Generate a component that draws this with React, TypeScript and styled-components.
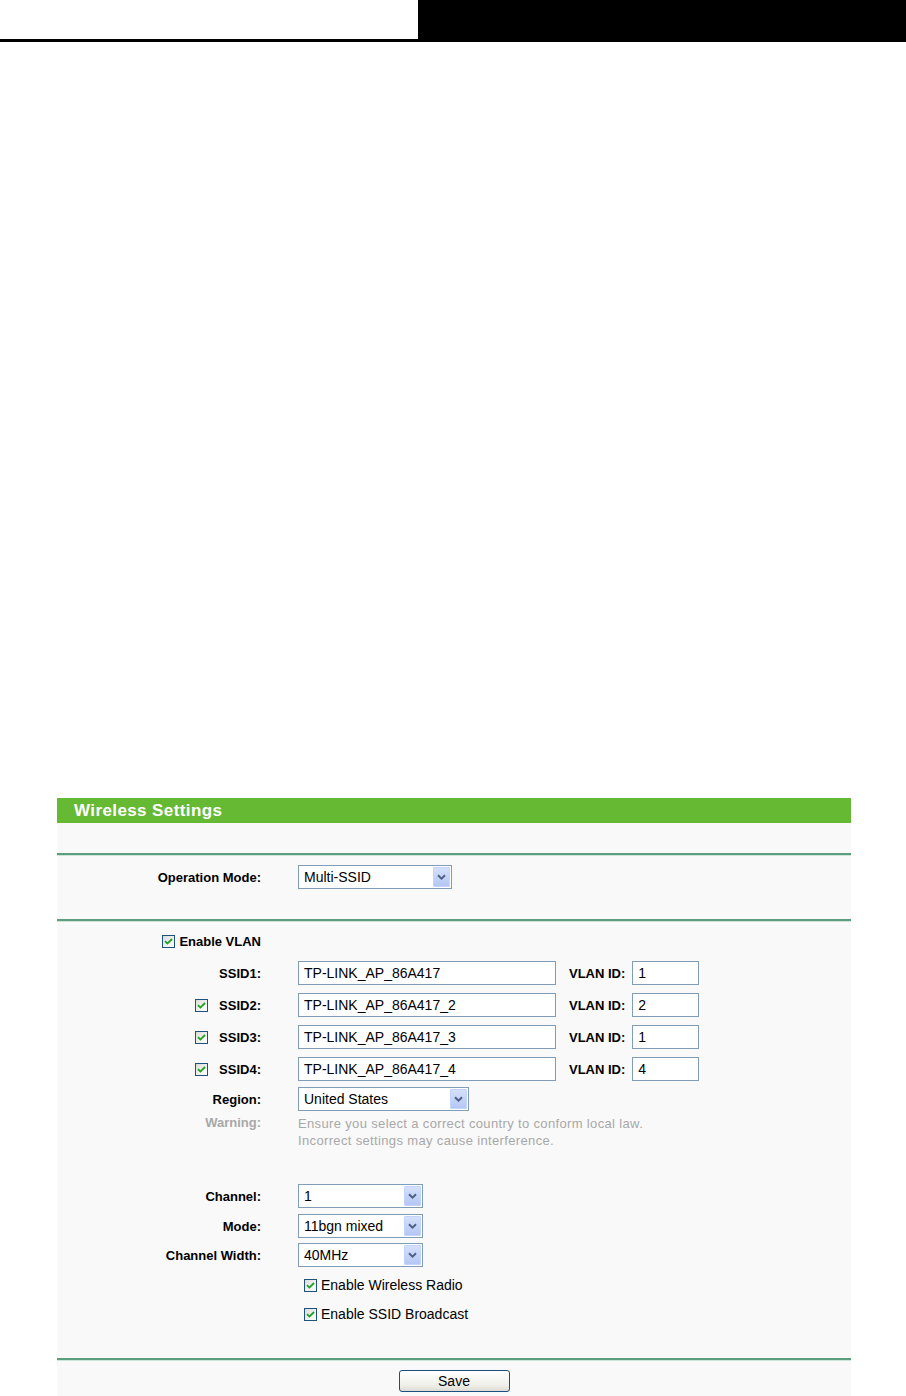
import React from 'react'
import styled, { createGlobalStyle } from 'styled-components'

const GlobalStyle = createGlobalStyle`
  html, body {
    margin: 0;
    padding: 0;
    background: #ffffff;
  }
  body {
    font-family: "Liberation Sans", Arial, sans-serif;
    color: #000000;
  }
`

const TopBar = styled.div`
  display: flex;
  height: 39px;

  & .blank {
    width: 418px;
    background: #ffffff;
  }
  & .dark {
    flex: 1;
    background: #000000;
  }
`

const TopRule = styled.div`
  height: 3px;
  background: #000000;
`

const Main = styled.div`
  padding: 756px 0 0 57px;
`

const Panel = styled.div`
  width: 794px;
  background: #f9f9f9;
`

const PanelTitle = styled.div`
  height: 25px;
  line-height: 25px;
  padding-left: 17px;
  background: #66b933;
  color: #ffffff;
  font-size: 17px;
  letter-spacing: 0.4px;
  font-weight: bold;
`

const Divider = styled.div`
  border-top: 2px solid #5d9c7d;
  border-bottom: 1px solid #cfe4d9;
`

const Section = styled.div<{ $top: number; $bottom: number }>`
  padding-top: ${({ $top }) => $top}px;
  padding-bottom: ${({ $bottom }) => $bottom}px;
`

const Row = styled.div<{ $top?: number }>`
  display: flex;
  align-items: center;
  height: 24px;
  margin-top: ${({ $top }) => $top ?? 0}px;
`

const Label = styled.div<{ $muted?: boolean }>`
  width: 204px;
  flex: none;
  display: flex;
  justify-content: flex-end;
  align-items: center;
  gap: 11px;
  font-size: 13px;
  font-weight: bold;
  color: ${({ $muted }) => ($muted ? '#a8a8a8' : '#000000')};
  white-space: nowrap;
`

const Content = styled.div<{ $indent?: number }>`
  margin-left: ${({ $indent }) => $indent ?? 37}px;
  display: flex;
  align-items: center;
`

const TextBox = styled.div<{ $width: number }>`
  box-sizing: border-box;
  width: ${({ $width }) => $width}px;
  height: 24px;
  border: 1px solid #7f9db9;
  background: #ffffff;
  padding-left: 5px;
  font-size: 14px;
  line-height: 22px;
  white-space: nowrap;
`

const InlineLabel = styled.span`
  margin: 0 7px 0 13px;
  font-size: 13px;
  font-weight: bold;
`

const SelectBox = styled.div<{ $width: number }>`
  box-sizing: border-box;
  width: ${({ $width }) => $width}px;
  height: 24px;
  border: 1px solid #7f9db9;
  background: #ffffff;
  display: flex;
  align-items: center;
  padding: 1px;
  font-size: 14px;

  & .value {
    flex: 1;
    padding-left: 4px;
    white-space: nowrap;
  }
`

const ArrowButton = styled.div`
  width: 17px;
  height: 20px;
  box-sizing: border-box;
  border: 1px solid #c3d3fd;
  border-radius: 1px;
  background: linear-gradient(#d4e0fb, #b4c7f4);
  display: flex;
  align-items: center;
  justify-content: center;
`

const CheckBox = styled.span`
  box-sizing: border-box;
  width: 13px;
  height: 13px;
  flex: none;
  border: 1px solid #1c5180;
  background: linear-gradient(135deg, #dcdcd7, #ffffff);
  display: inline-flex;
  align-items: center;
  justify-content: center;
`

const CheckLabel = styled.label<{ $bold?: boolean }>`
  display: flex;
  align-items: center;
  gap: 4px;
  font-size: ${({ $bold }) => ($bold ? 13 : 14)}px;
  font-weight: ${({ $bold }) => ($bold ? 'bold' : 'normal')};
`

const WarningRow = styled.div`
  display: flex;
  align-items: flex-start;
  margin-top: 4px;
`

const WarningText = styled.div`
  margin-left: 37px;
  font-size: 13px;
  line-height: 17px;
  letter-spacing: 0.35px;
  color: #a8a8a8;
`

const ButtonBar = styled.div`
  display: flex;
  justify-content: center;
  padding: 9px 0 6px;
`

const SaveButton = styled.button`
  width: 111px;
  height: 22px;
  border: 1px solid #1c4f7f;
  border-radius: 3px;
  background: linear-gradient(#ffffff, #f0f0ea 70%, #dcdcd4);
  font-family: "Liberation Sans", Arial, sans-serif;
  font-size: 14px;
  color: #000000;
  padding: 0;
`

const Check = () => (
  <CheckBox>
    <svg width="9" height="9" viewBox="0 0 9 9">
      <path d="M1 4.2 L3.4 6.6 L8 2" fill="none" stroke="#21a121" strokeWidth="1.8" />
    </svg>
  </CheckBox>
)

const Select: React.FC<{ value: string; width: number }> = ({ value, width }) => (
  <SelectBox $width={width}>
    <span className="value">{value}</span>
    <ArrowButton>
      <svg width="9" height="6" viewBox="0 0 9 6">
        <path d="M1 1.2 L4.5 4.6 L8 1.2" fill="none" stroke="#4d6185" strokeWidth="2" />
      </svg>
    </ArrowButton>
  </SelectBox>
)

const ssids = [
  { n: 1, name: 'TP-LINK_AP_86A417', vlan: '1', check: false },
  { n: 2, name: 'TP-LINK_AP_86A417_2', vlan: '2', check: true },
  { n: 3, name: 'TP-LINK_AP_86A417_3', vlan: '1', check: true },
  { n: 4, name: 'TP-LINK_AP_86A417_4', vlan: '4', check: true }
]

export default function App() {
  return (
    <>
      <GlobalStyle />
      <TopBar>
        <div className="blank" />
        <div className="dark" />
      </TopBar>
      <TopRule />
      <Main>
        <Panel>
          <PanelTitle>Wireless Settings</PanelTitle>
          <Section $top={30} $bottom={0} />
          <Divider />
          <Section $top={9} $bottom={30}>
            <Row>
              <Label>Operation Mode:</Label>
              <Content>
                <Select value="Multi-SSID" width={154} />
              </Content>
            </Row>
          </Section>
          <Divider />
          <Section $top={7} $bottom={32}>
            <Row>
              <Label>
                <CheckLabel $bold>
                  <Check />
                  Enable VLAN
                </CheckLabel>
              </Label>
            </Row>
            {ssids.map(s => (
              <Row key={s.n} $top={8}>
                <Label>
                  {s.check && <Check />}
                  {`SSID${s.n}:`}
                </Label>
                <Content>
                  <TextBox $width={258}>{s.name}</TextBox>
                  <InlineLabel>VLAN ID:</InlineLabel>
                  <TextBox $width={67}>{s.vlan}</TextBox>
                </Content>
              </Row>
            ))}
            <Row $top={6}>
              <Label>Region:</Label>
              <Content>
                <Select value="United States" width={171} />
              </Content>
            </Row>
            <WarningRow>
              <Label $muted>Warning:</Label>
              <WarningText>
                Ensure you select a correct country to conform local law.
                <br />
                Incorrect settings may cause interference.
              </WarningText>
            </WarningRow>
            <Row $top={35}>
              <Label>Channel:</Label>
              <Content>
                <Select value="1" width={125} />
              </Content>
            </Row>
            <Row $top={6}>
              <Label>Mode:</Label>
              <Content>
                <Select value="11bgn mixed" width={125} />
              </Content>
            </Row>
            <Row $top={5}>
              <Label>Channel Width:</Label>
              <Content>
                <Select value="40MHz" width={125} />
              </Content>
            </Row>
            <Row $top={6}>
              <Label />
              <Content $indent={43}>
                <CheckLabel>
                  <Check />
                  Enable Wireless Radio
                </CheckLabel>
              </Content>
            </Row>
            <Row $top={5}>
              <Label />
              <Content $indent={43}>
                <CheckLabel>
                  <Check />
                  Enable SSID Broadcast
                </CheckLabel>
              </Content>
            </Row>
          </Section>
          <Divider />
          <ButtonBar>
            <SaveButton>Save</SaveButton>
          </ButtonBar>
        </Panel>
      </Main>
    </>
  )
}
